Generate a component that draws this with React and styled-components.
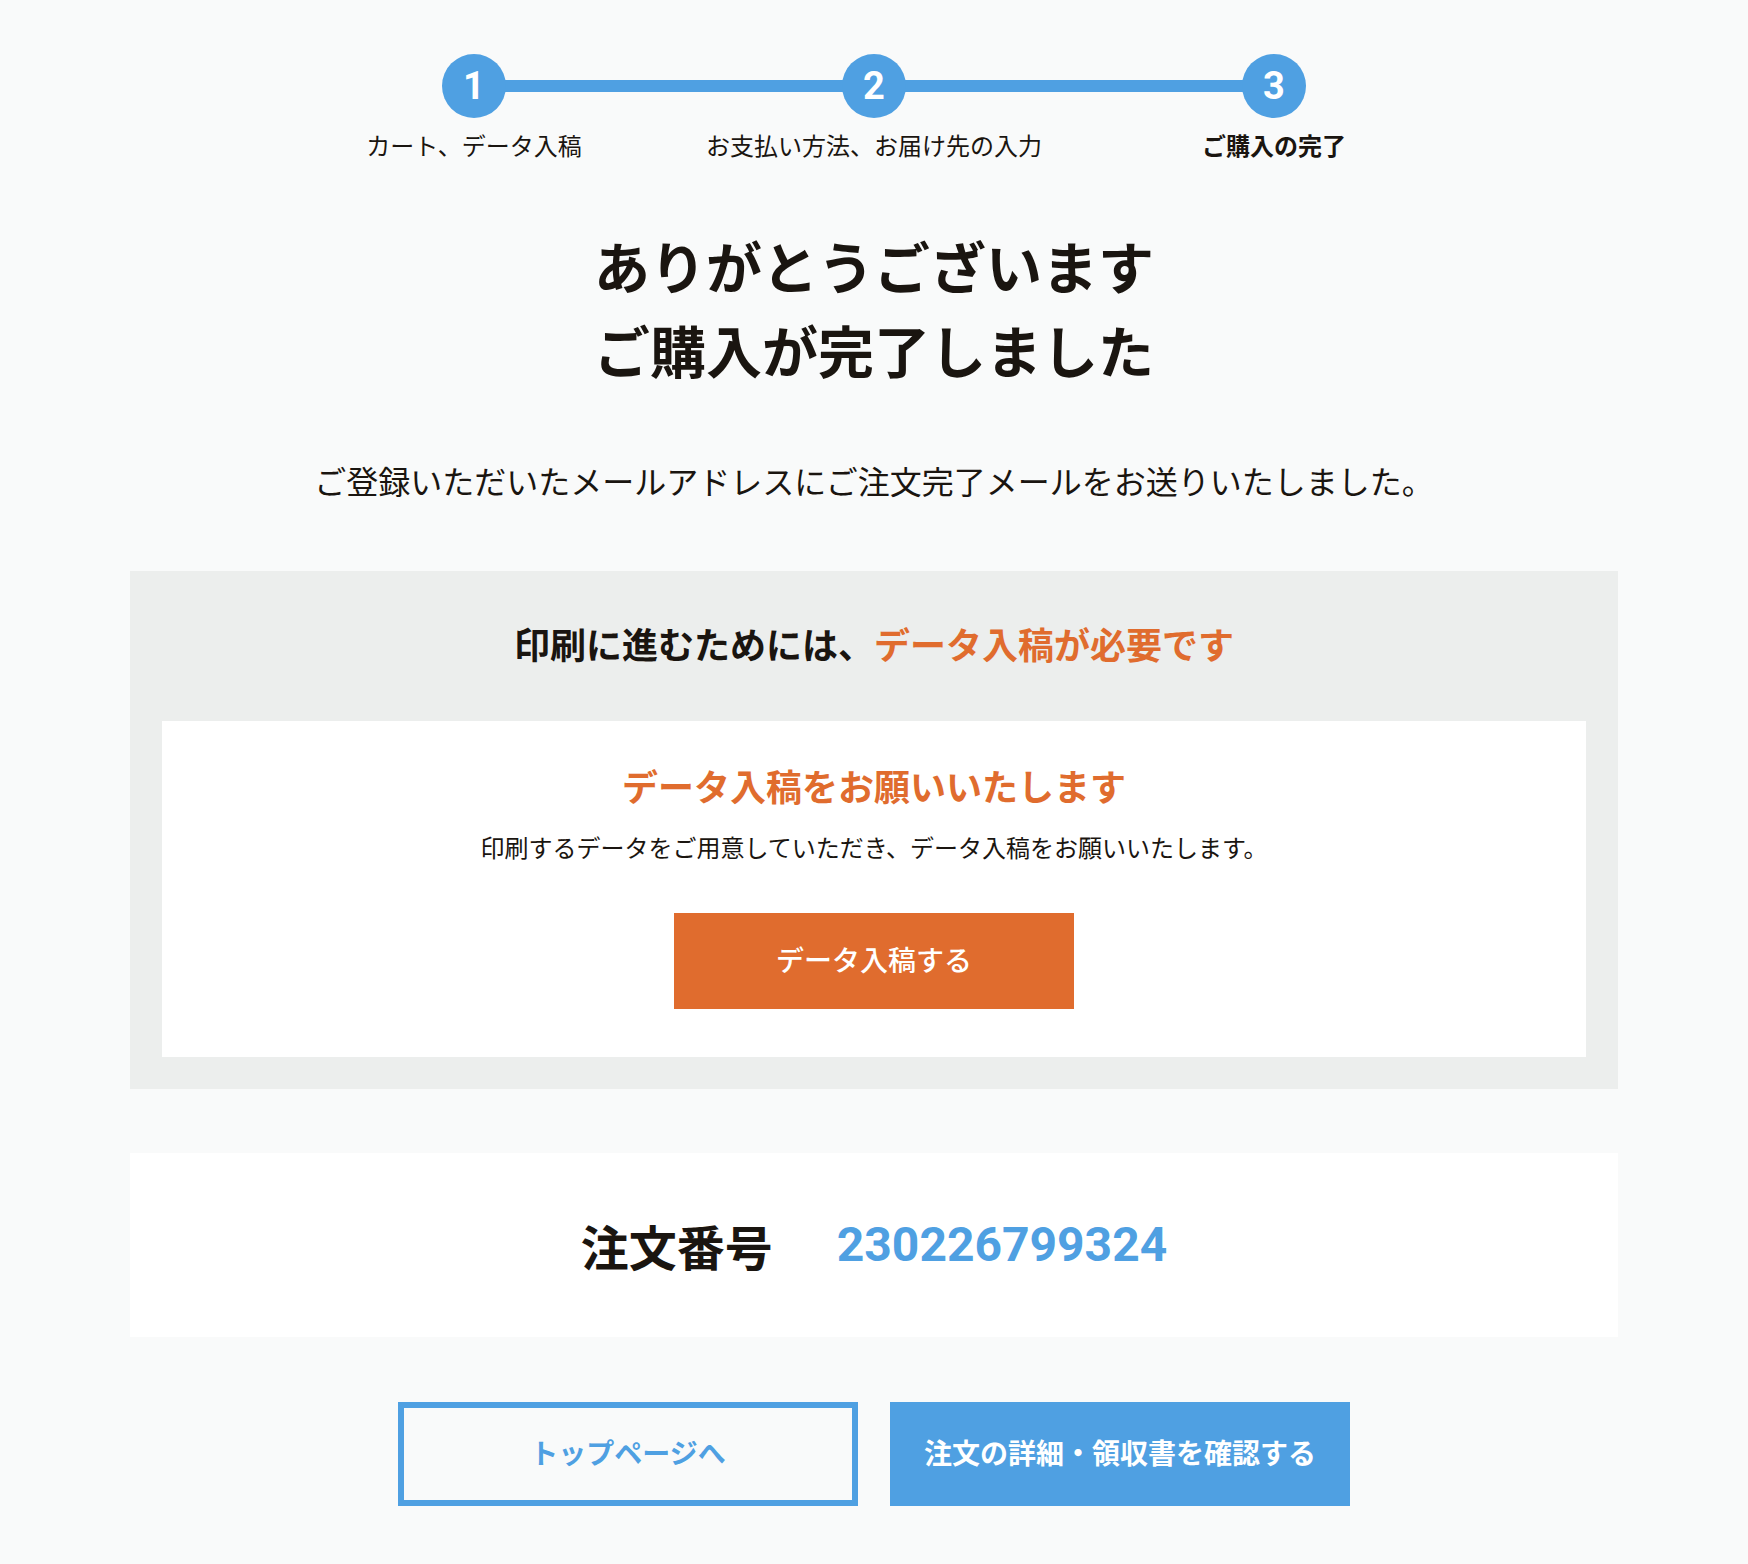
import React from "react";
import styled, { createGlobalStyle } from "styled-components";

const GlobalStyle = createGlobalStyle`
  html, body { margin: 0; padding: 0; }
  body {
    background: #f9fafa;
    color: #1a1510;
    font-family: "Noto Sans CJK JP", "Noto Sans", sans-serif;
  }
  * { box-sizing: border-box; }
`;

const Page = styled.main`
  display: flex;
  flex-direction: column;
  align-items: center;
  padding: 54px 130px 58px;
`;

const Steps = styled.ol`
  list-style: none;
  margin: 0;
  padding: 0;
  display: grid;
  grid-template-columns: repeat(3, 400px);
`;

const Step = styled.li`
  position: relative;
  display: flex;
  flex-direction: column;
  align-items: center;
  &:not(:last-child)::after {
    content: "";
    position: absolute;
    top: 26px;
    left: 50%;
    width: 100%;
    height: 12px;
    background: #4fa0e2;
    z-index: 0;
  }
`;

const Circle = styled.span`
  position: relative;
  z-index: 1;
  width: 64px;
  height: 64px;
  border-radius: 50%;
  background: #4fa0e2;
  color: #fff;
  display: flex;
  align-items: center;
  justify-content: center;
  font-family: Roboto, "Liberation Sans", sans-serif;
  font-weight: 700;
  font-size: 38px;
  line-height: 1;
`;

const StepLabel = styled.span`
  margin: 9px 0 2px;
  font-size: 24px;
  line-height: 36px;
  font-weight: ${(p) => (p.$current ? 700 : 400)};
  white-space: nowrap;
`;

const Title = styled.h1`
  margin: 58px 0 0;
  font-size: 56px;
  line-height: 84px;
  font-weight: 700;
  text-align: center;
`;

const Message = styled.p`
  margin: 65px 0 0;
  font-size: 32px;
  line-height: 48px;
  text-align: center;
`;

const UploadPanel = styled.section`
  width: 100%;
  margin-top: 67px;
  background: #eceeed;
  padding: 45px 32px 32px;
`;

const PanelHeading = styled.h2`
  margin: 0 0 51px;
  font-size: 36px;
  line-height: 54px;
  font-weight: 700;
  text-align: center;
`;

const Accent = styled.span`
  color: #e06c2e;
`;

const UploadCard = styled.div`
  background: #fff;
  padding: 37px 0 48px;
  display: flex;
  flex-direction: column;
  align-items: center;
`;

const CardHeading = styled.h3`
  margin: 0;
  font-size: 36px;
  line-height: 54px;
  font-weight: 700;
  color: #e06c2e;
`;

const CardText = styled.p`
  margin: 17px 0 0;
  font-size: 24px;
  line-height: 36px;
`;

const UploadButton = styled.button`
  margin-top: 48px;
  width: 400px;
  height: 96px;
  padding: 0 0 4px;
  border: none;
  background: #e06c2e;
  color: #fff;
  font-family: inherit;
  font-size: 28px;
  font-weight: 500;
  cursor: pointer;
`;

const OrderBox = styled.section`
  width: 100%;
  height: 184px;
  margin-top: 64px;
  background: #fff;
  display: flex;
  align-items: center;
  justify-content: center;
  gap: 64px;
`;

const OrderLabel = styled.span`
  font-size: 48px;
  font-weight: 700;
  line-height: 1;
`;

const OrderNumber = styled.span`
  font-family: Roboto, "Liberation Sans", sans-serif;
  font-size: 48px;
  font-weight: 700;
  line-height: 1;
  color: #4fa0e2;
`;

const Actions = styled.div`
  margin-top: 65px;
  display: flex;
  gap: 32px;
`;

const ActionButton = styled.button`
  width: 460px;
  height: 104px;
  padding: 0 0 4px;
  border: 6px solid #4fa0e2;
  background: ${(p) => (p.$primary ? "#4fa0e2" : "transparent")};
  color: ${(p) => (p.$primary ? "#fff" : "#4fa0e2")};
  font-family: inherit;
  font-size: 28px;
  font-weight: 700;
  cursor: pointer;
`;

const steps = [
  { n: 1, label: "カート、データ入稿" },
  { n: 2, label: "お支払い方法、お届け先の入力" },
  { n: 3, label: "ご購入の完了", current: true },
];

export default function App() {
  return (
    <>
      <GlobalStyle />
      <Page>
        <Steps>
          {steps.map((s) => (
            <Step key={s.n}>
              <Circle>{s.n}</Circle>
              <StepLabel $current={s.current}>{s.label}</StepLabel>
            </Step>
          ))}
        </Steps>

        <Title>
          ありがとうございます
          <br />
          ご購入が完了しました
        </Title>

        <Message>
          ご登録いただいたメールアドレスにご注文完了メールをお送りいたしました。
        </Message>

        <UploadPanel>
          <PanelHeading>
            印刷に進むためには、<Accent>データ入稿が必要です</Accent>
          </PanelHeading>
          <UploadCard>
            <CardHeading>データ入稿をお願いいたします</CardHeading>
            <CardText>
              印刷するデータをご用意していただき、データ入稿をお願いいたします。
            </CardText>
            <UploadButton>データ入稿する</UploadButton>
          </UploadCard>
        </UploadPanel>

        <OrderBox>
          <OrderLabel>注文番号</OrderLabel>
          <OrderNumber>230226799324</OrderNumber>
        </OrderBox>

        <Actions>
          <ActionButton>トップページへ</ActionButton>
          <ActionButton $primary>注文の詳細・領収書を確認する</ActionButton>
        </Actions>
      </Page>
    </>
  );
}
